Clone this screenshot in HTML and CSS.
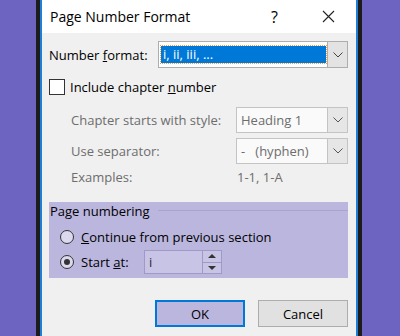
FILE: index.html
```html
<!DOCTYPE html>
<html lang="en">
<head>
<meta charset="UTF-8">
<title>Page Number Format</title>
<link rel="stylesheet" href="styles.css">
</head>
<body>

<!-- WINDOW -->
<div class="frame">
  <div class="dialog">

    <!-- TITLE BAR -->
    <div class="titlebar">
      <span class="title">Page Number Format</span>
      <span class="help">?</span>
      <svg class="close" width="13" height="13" viewBox="0 0 13 13">
        <path d="M1 1 L12 12 M12 1 L1 12" stroke="#222" stroke-width="1.1" fill="none"/>
      </svg>
    </div>

    <div class="content">
      <!-- NUMBER FORMAT -->
      <div class="row fmt-row">
        <span class="lbl">Number <u>f</u>ormat:</span>
        <div class="select fmt">
          <span class="value"><span class="hl">i, ii, iii, ...</span></span>
          <span class="arrow"><svg width="10" height="6" viewBox="0 0 10 6"><path d="M0.5 0.5 L5 5 L9.5 0.5" stroke="#444" fill="none"/></svg></span>
        </div>
      </div>

      <!-- CHAPTER -->
      <div class="check-row">
        <span class="checkbox"></span>
        <span>Include chapter <u>n</u>umber</span>
      </div>

      <div class="row sub style-row">
        <span class="lbl-sub">Chapter starts with style:</span>
        <div class="select dis">
          <span class="value">Heading 1</span>
          <span class="arrow"><svg width="10" height="6" viewBox="0 0 10 6"><path d="M0.5 0.5 L5 5 L9.5 0.5" stroke="#555" fill="none"/></svg></span>
        </div>
      </div>

      <div class="row sub sep-row">
        <span class="lbl-sub">Use separator:</span>
        <div class="select dis">
          <span class="value pre">-   (hyphen)</span>
          <span class="arrow"><svg width="10" height="6" viewBox="0 0 10 6"><path d="M0.5 0.5 L5 5 L9.5 0.5" stroke="#555" fill="none"/></svg></span>
        </div>
      </div>

      <div class="row sub ex-row">
        <span class="lbl-sub">Examples:</span>
        <span class="ex">1-1, 1-A</span>
      </div>

      <!-- PAGE NUMBERING -->
      <div class="group">
        <div class="group-title"><span>Page numbering</span><span class="line"></span></div>
        <div class="radio-row">
          <span class="radio"></span>
          <span><u>C</u>ontinue from previous section</span>
        </div>
        <div class="radio-row start-row">
          <span class="radio on"></span>
          <span class="start-lbl">Start <u>a</u>t:</span>
          <div class="spin">
            <span class="spin-val">i</span>
            <span class="spin-btns">
              <span class="up"></span>
              <span class="down"></span>
            </span>
          </div>
        </div>
      </div>

      <!-- BUTTONS -->
      <div class="buttons">
        <button class="btn ok">OK</button>
        <button class="btn">Cancel</button>
      </div>
    </div>

  </div>
</div>

</body>
</html>
```

FILE: styles.css
```css
* {
  box-sizing: border-box;
}
body {
  margin: 0;
  height: 336px;
  overflow: hidden;
  background: #6c64c0;
  font-family: 'Open Sans', 'Noto Sans', sans-serif;
  font-size: 13px;
  color: #000;
  display: flex;
  padding-left: 36px;
}
.frame {
  width: 326px;
  height: 336px;
  border-left: 4px solid #1c1c1c;
  border-right: 4px solid #1c1c1c;
}
.dialog {
  height: 100%;
  background: #fff;
  border-left: 2px solid #1f7fd6;
  border-right: 2px solid #1f7fd6;
  display: flex;
  flex-direction: column;
}
.titlebar {
  height: 33px;
  display: flex;
  align-items: center;
  padding-left: 8px;
  background: #fff;
}
.title {
  flex: 1;
  font-size: 14px;
}
.help {
  font-size: 16px;
  margin-right: 44px;
}
.close {
  margin-right: 21px;
}
.content {
  flex: 1;
  background: #f0f0f0;
  padding: 8px 8px 0 7px;
}
.row {
  display: flex;
  align-items: center;
}
.fmt-row {
  height: 27px;
}
.lbl {
  width: 109px;
}
.select {
  display: flex;
  height: 100%;
  background: #fff;
  border: 1px solid #adadad;
}
.select .value {
  flex: 1;
  display: flex;
  align-items: center;
  padding-left: 4px;
}
.select .arrow {
  width: 20px;
  display: flex;
  align-items: center;
  justify-content: center;
  background: #e3e3e3;
  border-left: 1px solid #adadad;
}
.fmt {
  width: 190px;
}
.fmt .value {
  padding: 2px 1px 2px 2px;
}
.hl {
  display: block;
  width: 100%;
  height: 17px;
  line-height: 16px;
  padding-left: 2px;
  background: #0078d7;
  color: #fff;
  outline: 1px dotted #f0a040;
}
.check-row {
  display: flex;
  align-items: center;
  height: 16px;
  margin-top: 11px;
}
.checkbox {
  width: 16px;
  height: 16px;
  border: 1px solid #333;
  background: #fff;
  margin-right: 5px;
}
.sub {
  padding-left: 22px;
  color: #6d6d6d;
}
.lbl-sub {
  width: 165px;
}
.style-row {
  height: 26px;
  margin-top: 12px;
}
.sep-row {
  height: 26px;
  margin-top: 5px;
}
.ex-row {
  height: 18px;
  margin-top: 4px;
}
.dis {
  width: 112px;
  background: #fafafa;
  border-color: #c4c4c4;
}
.dis .arrow {
  background: #e6e6e6;
  border-left-color: #c4c4c4;
}
.pre {
  white-space: pre;
}
.ex {
  padding-left: 1px;
}
.group {
  margin-top: 16px;
  height: 76px;
  background: #bbb6de;
  padding-left: 11px;
}
.group-title {
  display: flex;
  align-items: center;
  height: 18px;
  margin-left: -10px;
}
.group-title .line {
  flex: 1;
  height: 1px;
  background: #a9a4cf;
  margin: 0 0 2px 8px;
}
.radio-row {
  display: flex;
  align-items: center;
  height: 18px;
  margin-top: 8px;
}
.start-row {
  height: 24px;
  margin-top: 4px;
}
.radio {
  width: 14px;
  height: 14px;
  border: 1px solid #333;
  border-radius: 50%;
  background: #dcd9ef;
  margin-right: 7px;
  display: flex;
  align-items: center;
  justify-content: center;
}
.radio.on::after {
  content: "";
  width: 6px;
  height: 6px;
  border-radius: 50%;
  background: #333;
}
.start-lbl {
  width: 63px;
}
.spin {
  width: 78px;
  height: 24px;
  display: flex;
  border: 1px solid #9e99c6;
  background: #c8c4e6;
}
.spin-val {
  flex: 1;
  padding-left: 4px;
  line-height: 22px;
  color: #3a1c3a;
}
.spin-btns {
  width: 19px;
  display: flex;
  flex-direction: column;
  border-left: 1px solid #9e99c6;
}
.spin-btns span {
  flex: 1;
  display: flex;
  align-items: center;
  justify-content: center;
}
.spin-btns .up {
  border-bottom: 1px solid #9e99c6;
}
.spin-btns .up::after {
  content: "";
  border-left: 4px solid transparent;
  border-right: 4px solid transparent;
  border-bottom: 4px solid #333;
}
.spin-btns .down::after {
  content: "";
  border-left: 4px solid transparent;
  border-right: 4px solid transparent;
  border-top: 4px solid #333;
}
.buttons {
  display: flex;
  justify-content: flex-end;
  gap: 13px;
  margin-top: 22px;
}
.btn {
  width: 90px;
  height: 27px;
  font-family: inherit;
  font-size: 13px;
  color: #000;
  background: #e1e1e1;
  border: 1px solid #adadad;
  padding: 0;
}
.btn.ok {
  background: #bbb6de;
  border: 2px solid #0078d7;
}
```
